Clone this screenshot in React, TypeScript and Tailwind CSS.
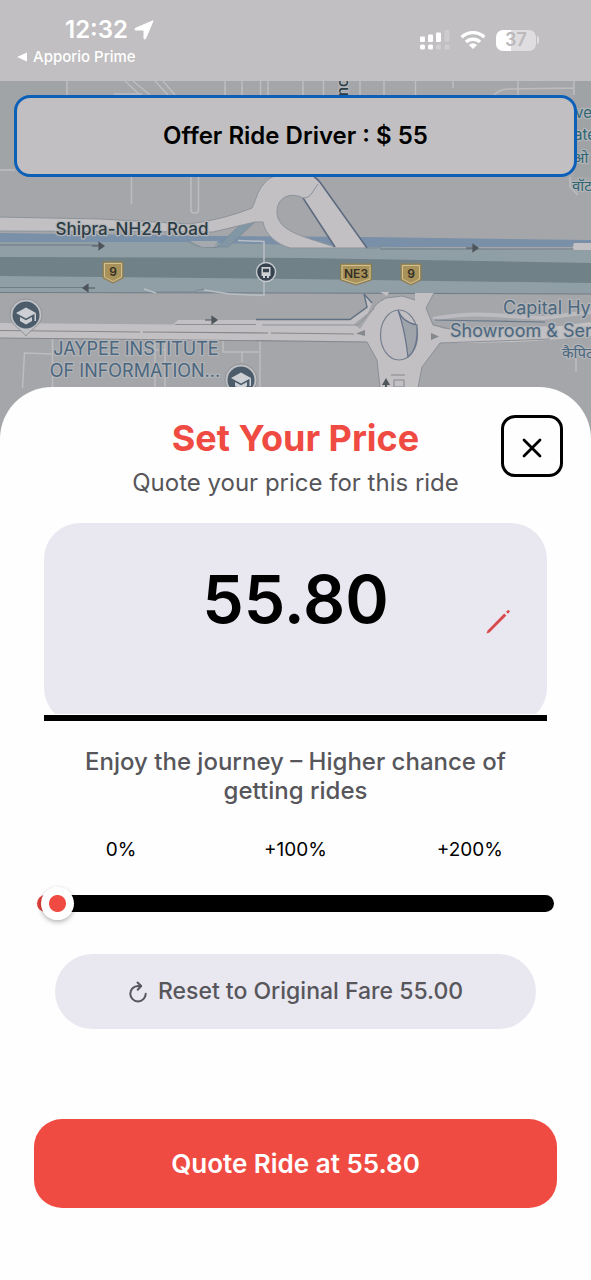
import { useState } from "react";

const BASE_FARE = 55;

function LocationArrow() {
  return (
    <svg width="20" height="20" viewBox="0 0 20 20" aria-hidden="true">
      <path d="M19 .8 11.6 18.6c-.4.9-1.6.7-1.6-.3V10H1.800c-1.100 0-1.300-1.300-.3-1.700L19 .8Z" fill="#fff" stroke="#fff" strokeWidth="1" strokeLinejoin="round" />
    </svg>
  );
}

function SignalIcon() {
  return (
    <svg width="30" height="22" viewBox="0 0 30 22" fill="#fff" aria-hidden="true">
      <rect x="0" y="7.500" width="5" height="5.500" rx="1" />
      <rect x="8" y="5.500" width="5" height="7.500" rx="1" />
      <rect x="16" y="3.500" width="5" height="9.500" rx="1" />
      <rect x="24.500" y="1" width="5" height="12" rx="1" opacity=".2" />
      <rect x="0" y="15.500" width="5" height="5" rx="1.500" />
      <rect x="8" y="15.500" width="5" height="5" rx="1.500" />
      <rect x="16" y="15.500" width="5" height="5" rx="1.500" opacity=".25" />
      <rect x="24.500" y="15.500" width="5" height="5" rx="1.500" opacity=".25" />
    </svg>
  );
}

function WifiIcon() {
  return (
    <svg width="26" height="20" viewBox="0 0 28 20" fill="none" stroke="#fff" strokeWidth="3.700" aria-hidden="true">
      <path d="M1.800 7a17.500 17.500 0 0 1 24.400 0" />
      <path d="M6.500 12.200a10.800 10.800 0 0 1 15 0" />
      <path d="M14 19.800 9.600 15.500a6 6 0 0 1 8.800 0Z" fill="#fff" stroke="none" />
    </svg>
  );
}

function Battery({ level }: { level: number }) {
  return (
    <div className="flex items-center gap-px">
      <div className="flex h-[21px] w-10 items-center justify-center rounded-[7px] bg-[linear-gradient(to_right,#fff_37%,#dfdddf_37%)] text-lg leading-none font-semibold text-[#bbb9bb]">
        {level}
      </div>
      <div className="h-2 w-[2px] rounded-r-full bg-[#dfdddf]" />
    </div>
  );
}

function StatusBar() {
  return (
    <header className="flex h-[81px] items-start justify-between bg-[#c1bfc1] pr-[52px] pl-4 text-white">
      <div className="pt-4">
        <div className="flex items-center gap-[6px] pl-[49px]">
          <span className="text-2xl leading-7 font-semibold">12:32</span>
          <LocationArrow />
        </div>
        <a href="#back" className="flex items-center gap-[5px] text-[15px] leading-[26px] font-medium">
          <svg width="12" height="10" viewBox="0 0 12 10" aria-hidden="true">
            <path d="M11 .5v9L1 5Z" fill="#fff" />
          </svg>
          Apporio Prime
        </a>
      </div>
      <div className="flex items-center gap-[10px] pt-[29px]">
        <SignalIcon />
        <WifiIcon />
        <Battery level={37} />
      </div>
    </header>
  );
}

function Shield({ x, y, w, label }: { x: number; y: number; w: number; label: string }) {
  const h = w / 2;
  return (
    <g transform={`translate(${x} ${y})`}>
      <path d={`M${-h} -10H${h}V6L0 11L${-h} 6Z`} fill="#a8925a" stroke="#8a7a50" strokeWidth="1" strokeLinejoin="round" />
      <path d={`M${-h + 1.5} -8.500H${h - 1.5}V5L0 9.500L${-h + 1.5} 5Z`} fill="none" stroke="#cfc193" strokeWidth="1" />
      <text y="4" textAnchor="middle" fontSize="12" fontWeight="600" fill="#332f26">{label}</text>
    </g>
  );
}

function SchoolPin({ x, y }: { x: number; y: number }) {
  return (
    <g transform={`translate(${x} ${y})`}>
      <path d="M0 21C-4 15-16 10-16 0a16 16 0 0 1 32 0C16 10 4 15 0 21Z" fill="#bfc1c5" stroke="#85888d" strokeWidth=".8" />
      <circle r="13.500" fill="#4d5c6b" />
      <path d="M0 -7.500 10 -2 0 3.500-10 -2ZM-6 2v4l6 3.500 6-3.500V2L0 5.300ZM8.500-1.500H10V6H8.500Z" fill="#ccd0d4" />
    </g>
  );
}

function Arrow({ x, y, flip }: { x: number; y: number; flip?: boolean }) {
  return (
    <path
      d="M-6 0H4M1-3.500 6 0 1 3.500Z"
      transform={`translate(${x} ${y}) rotate(${flip ? 180 : 0})`}
      fill="#4e555b"
      stroke="#4e555b"
      strokeWidth="1.200"
    />
  );
}

function MapCanvas() {
  return (
    <svg
      className="absolute inset-0 h-full w-full font-[Inter,'Noto_Sans',sans-serif]"
      viewBox="0 81 591 369"
      preserveAspectRatio="xMidYMin slice"
      role="img"
      aria-label="Map"
    >
      <rect y="81" width="591" height="369" fill="#a5a6a9" />
      <rect y="81" width="67" height="89" fill="#a0a4a6" />
      <rect x="574" y="81" width="17" height="96" fill="#a0a3a5" />

      {/* side streets */}
      <g fill="none" stroke="#bdbdc0" strokeWidth="1.500">
        <path d="M67 81v14M125 81l15 14M133 81l17 14M155 81l13 14M163 81l12 14M114 94h28M225 81v14M242 81v14M260.500 81v14M268 81v14" />
        <path d="M303 81v14M323.500 81v14M360 81v14M384 81v14M415.500 81v14M453 81v7M518 81v14M494 95q6-6 14-6l66-1M574 81v14M0 170h15" />
        <path d="M131.500 177v27M191 177v33q0 3 3 3h1.500q3 0 3-3v-33M570 177v10l8 8" />
        <path d="M52.500 338v50M52.500 354l-28-1-2 35M223 340v12h36M242 352v10M260 340v48M155 340v48M165 340v48M154 350h12M576 350v22" />
      </g>

      {/* highway */}
      <path d="M0 233 220 236 365 237 591 240V247H0Z" fill="#7a90a8" />
      <path d="M0 242 190 242 365 247 591 250V294L300 293 0 292Z" fill="#909ea6" />
      <path d="M0 257 300 258 591 263V283L300 279 0 276Z" fill="#708188" />
      <path d="M0 292.500 300 293 591 294M0 245h100M380 249h211M0 287.500h86" fill="none" stroke="#6f7b87" strokeWidth="1" />
      <path d="M188 241q8 6 14 6l15 .5M204 289q-8 1-10 3h-40M366 248h12l8-4" fill="none" stroke="#7d8a96" strokeWidth="1" />
      <path d="M190 241h28l-4 6h-12q-6-3-12-6Z" fill="#a5a9ad" />
      <path d="M217 247 243 222 255 222 228 247Z" fill="#8197a5" stroke="#76858f" strokeWidth=".6" />
      <path d="M238 240.500 264 241.500V295.500L230 294 204 290M144 289l12 4" fill="none" stroke="#b8bfc4" strokeWidth="1.500" />
      <path d="M574 243h17v7h-17q-2-3 0-7Z" fill="#c2c0c3" />

      {/* service road and loop ramp */}
      <path
        fillRule="evenodd"
        d="M-2 217 100 219 190 224Q225 219 252 208C256 200 258 190 263 185 267 180 270 177 276 176H314Q319 180 323 186L367 248H290C276 244 265 234 263 222L255 222 213 232-2 231ZM303 198C292 192 277 196 277 212 277 232 306 237 335 247Z"
        fill="#c2c0c3"
        stroke="#8d939b"
        strokeWidth="1"
      />
      <path d="M303 198l32 49M314 177q4 2 8 8l45 63" fill="none" stroke="#5d6a80" strokeWidth="1.500" />
      <path d="M303 198q6 0 9-5l6-9" fill="none" stroke="#8a909a" />

      {/* lower carriageway */}
      <path d="M0 323 173 324.500 178 320H350L368 308 364 294 372 303 368 313 354 324 360 329 373 310Q374 304 386 298L402 296 415 300 415 293H434L426 308 433 325 445 329 560 326 591 322V336Q520 344 440 343L422 367 418 388H380L377 360 367 342 190 340 0 338Z" fill="#c2c0c3" />
      <path d="M0 330.500 140 332M143 332l125 1M271 333 354 334M367 342 190 340 0 338" fill="none" stroke="#85888d" strokeWidth="1.200" />
      <path d="M175 324.500H256M262 325H358L373 309" fill="none" stroke="#8d9197" strokeWidth="1" />
      <path d="M256 319.500H350L367 307 364 294 372 303" fill="none" stroke="#5f7084" strokeWidth="1.300" />
      <path d="M380 292l7 4 2-4Z" fill="#c2c0c3" />
      <path d="M356 333.500l9-3.500v6ZM431 333l8 3.500-8 3.500Z" fill="#85888d" />
      <path d="M367 342 377 360 380 388M418 388 422 367 440 343 550 339M373 310Q374 304 386 298L402 296 415 300M434 293 426 308 433 325 450 329" fill="none" stroke="#8a8f97" strokeWidth="1" />
      <path d="M433 319q30-6 60-4l50 3 48-6" fill="none" stroke="#bcbcc0" strokeWidth="4" />
      <path d="M434 320 545 322" fill="none" stroke="#66788a" strokeWidth="1.200" />
      <ellipse cx="399" cy="335" rx="18.500" ry="25" fill="#c0bec2" stroke="#75808f" strokeWidth="1.200" />
      <path d="M398 310q4 12 19 15v10q-1 16-9 22Q405 330 398 310Z" fill="#9fa3aa" stroke="#65738a" strokeWidth="1.200" />
      <path d="M400 311q8 3 15 12-9-3-15-12Z" fill="#c2c0c3" />
      <path d="M391 375h14M394 380h10v7h-10Z" fill="none" stroke="#85888d" />
      <path d="M386 378l4 7h-3v4h-2v-4h-3Z" fill="#4e555b" />

      <Arrow x={98} y={246} />
      <Arrow x={89} y={288} flip />
      <Arrow x={211} y={320} />
      <Arrow x={472} y={248} />

      <Shield x={113} y={272} w={20} label="9" />
      <Shield x={356} y={274} w={31} label="NE3" />
      <Shield x={411} y={274} w={20} label="9" />

      {/* bus stop */}
      <g transform="translate(266 272)">
        <circle r="9.500" fill="#36424f" stroke="#c3c8cd" strokeWidth="1.500" />
        <path fillRule="evenodd" d="M-4.500-5h9v9h-1.500v2h-2V4h-2v2h-2V4h-1.500ZM-3-3.300v3.600h6v-3.600Z" fill="#ccd0d4" />
      </g>

      <SchoolPin x={26} y={315} />
      <SchoolPin x={241} y={380} />

      {/* place names */}
      <g paintOrder="stroke" stroke="#b3b4b7" strokeWidth="2.500" strokeLinejoin="round">
        <text x="132" y="235" textAnchor="middle" fontSize="17" fontWeight="500" fill="#2c3c44">Shipra-NH24 Road</text>
        <g fontSize="18" fill="#4a6780">
          <text x="136" y="355" textAnchor="middle">JAYPEE INSTITUTE</text>
          <text x="135" y="377" textAnchor="middle">OF INFORMATION...</text>
          <text x="503" y="314">Capital Hyu</text>
          <text x="450" y="337">Showroom &amp; Serv</text>
          <text x="562" y="358" fontSize="15">कैपिट</text>
        </g>
        <g fontSize="15" fill="#2f6674">
          <text x="575" y="118">ve</text>
          <text x="574" y="140">ate</text>
          <text x="573" y="163">ओ</text>
          <text x="572" y="191">वॉट</text>
        </g>
        <text transform="translate(348 96) rotate(-90)" fontSize="15" fontWeight="500" fill="#2c3c44">no</text>
      </g>
    </svg>
  );
}

function PencilIcon() {
  return (
    <svg width="26" height="26" viewBox="0 0 26 26" fill="#d94a4e" aria-hidden="true">
      <path d="M19.200 4.400 21.400 6.600 4.500 23.400 1.500 24.500 2.600 21.500Z" />
      <path d="m21 2.800 1.500-1.300a1.200 1.200 0 0 1 1.800 1.800L23 4.800Z" />
    </svg>
  );
}

function ResetIcon() {
  return (
    <svg width="20" height="22" viewBox="0 0 20 22" fill="none" stroke="#57565b" strokeWidth="2" strokeLinecap="round" strokeLinejoin="round" aria-hidden="true">
      <path d="M12.500 5H10a7.700 7.700 0 1 0 7.700 7.700" />
      <path d="m9.500 1.500 3.700 3.500-3.500 3.700" />
    </svg>
  );
}

export default function App() {
  const [percent, setPercent] = useState(1.45);
  const fare = (BASE_FARE * (1 + percent / 100)).toFixed(2);
  const fill = `calc(16px + (100% - 32px) * ${percent / 200})`;

  return (
    <div className="flex min-h-screen flex-col bg-white font-[Inter,'Noto_Sans',sans-serif] text-black">
      <StatusBar />

      <section className="relative h-[369px] overflow-hidden px-[14px] pt-[14px]">
        <MapCanvas />
        <div className="relative rounded-2xl border-3 border-[#0c60b8] bg-[#c1bfc1] py-6 text-center text-2xl leading-7 font-semibold">
          Offer Ride Driver : $ {BASE_FARE}
        </div>
      </section>

      <main className="relative -mt-[63px] flex flex-1 flex-col rounded-t-[52px] bg-[#fefefe] px-[34px] pt-7 pb-[72px]">
        <div className="text-center">
          <h1 className="text-4xl leading-[46px] font-bold text-[#ef4b42]">Set Your Price</h1>
          <p className="pt-1 text-2xl leading-9 text-[#56555a]">Quote your price for this ride</p>
        </div>
        <button
          type="button"
          aria-label="Close"
          className="absolute top-7 right-7 flex size-[62px] items-center justify-center rounded-[14px] border-3 border-black"
        >
          <svg width="20" height="20" viewBox="0 0 20 20" fill="none" stroke="#000" strokeWidth="2.800" strokeLinecap="round" className="mt-1" aria-hidden="true">
            <path d="M2 2l16 16M18 2 2 18" />
          </svg>
        </button>

        <div className="mx-[10px] mt-[22px]">
          <div className="overflow-hidden">
            <div className="-mb-[10px] flex h-[201px] items-start rounded-[36px] bg-[#e9e7f0] px-9 pt-10">
              <span className="w-[26px]" />
              <label className="sr-only" htmlFor="fare">Your price</label>
              <input id="fare" readOnly value={fare} className="min-w-0 flex-1 bg-transparent text-center text-[66px] leading-[72px] font-semibold outline-none" />
              <button type="button" aria-label="Edit price" className="mt-[46px]">
                <PencilIcon />
              </button>
            </div>
          </div>
          <div className="mt-px h-[6px] bg-black" />
        </div>

        <p className="mx-auto mt-[26px] max-w-[460px] text-center text-2xl leading-[29px] font-medium text-[#57565b]">
          Enjoy the journey – Higher chance of getting rides
        </p>

        <div className="mt-[33px] grid grid-cols-3 text-center text-[19px] leading-6">
          <span>0%</span>
          <span>+100%</span>
          <span>+200%</span>
        </div>
        <input
          type="range"
          aria-label="Price increase"
          min={0}
          max={200}
          step={0.01}
          value={percent}
          onChange={(e) => setPercent(Number(e.target.value))}
          style={{ "--fill": fill } as React.CSSProperties}
          className="mx-[3px] mt-6 h-[34px] appearance-none bg-transparent [&::-webkit-slider-runnable-track]:h-[17px] [&::-webkit-slider-runnable-track]:rounded-full [&::-webkit-slider-runnable-track]:bg-[linear-gradient(to_right,#e2403c_var(--fill),#000_var(--fill))] [&::-webkit-slider-thumb]:-mt-2 [&::-webkit-slider-thumb]:size-[33px] [&::-webkit-slider-thumb]:appearance-none [&::-webkit-slider-thumb]:rounded-full [&::-webkit-slider-thumb]:bg-[radial-gradient(circle,#ef4b42_8px,#fff_9px)] [&::-webkit-slider-thumb]:shadow-[0_2px_5px_rgba(0,0,0,0.3)]"
        />

        <button
          type="button"
          onClick={() => setPercent(0)}
          className="mx-[21px] mt-[34px] flex h-[75px] items-center justify-center gap-[10px] rounded-full bg-[#e9e7f0] text-[23px] font-medium text-[#57565b]"
        >
          <ResetIcon />
          Reset to Original Fare {BASE_FARE.toFixed(2)}
        </button>

        <button type="button" className="mt-auto h-[89px] rounded-[28px] bg-[#ef4b42] text-[26px] font-semibold text-white">
          Quote Ride at {fare}
        </button>
      </main>
    </div>
  );
}
